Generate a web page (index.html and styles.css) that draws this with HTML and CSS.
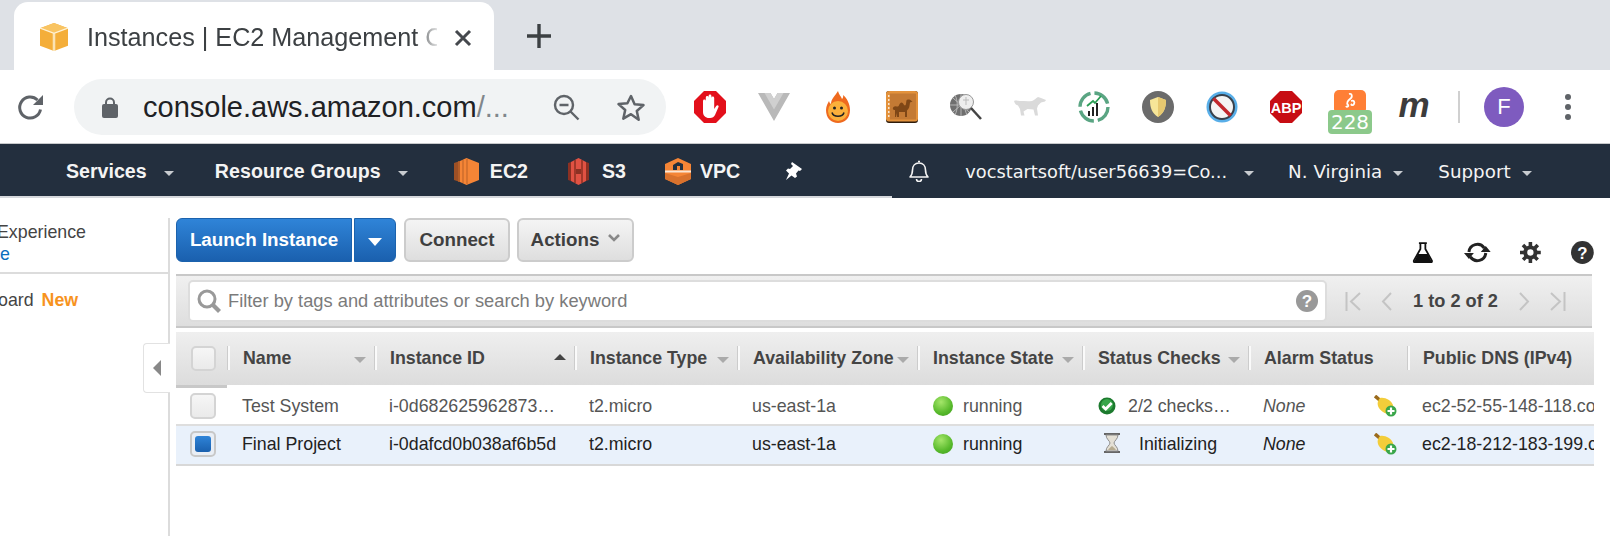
FILE: index.html
```html
<!DOCTYPE html>
<html lang="en">
<head>
<meta charset="utf-8">
<title>Instances | EC2 Management Console</title>
<link rel="stylesheet" href="styles.css">
</head>
<body>
<div class="tabstrip">
  <div class="tab">
    <svg class="favicon" width="28" height="28" viewBox="3 1 22 27" preserveAspectRatio="none"><path d="M3 6 14 1l11 5v17l-11 5-11-5z" fill="#f4ae3a"/><path d="M3 6l11 5 11-5-11-5z" fill="#f9c462"/><path d="M13 11h2v17h-2z" fill="#fbe3b4"/><path d="M3 6l11 5 11-5" fill="none" stroke="#fff2d6" stroke-width="1.2"/></svg>
    <span class="tab-title">Instances | EC2 Management C</span>
    <svg class="tab-close" width="18" height="18" viewBox="0 0 18 18"><path d="M2 2l14 14M16 2 2 16" stroke="#45484d" stroke-width="3" fill="none"/></svg>
  </div>
  <svg class="newtab" width="24" height="24" viewBox="0 0 24 24"><path d="M12 0v24M0 12h24" stroke="#3c4043" stroke-width="3.4" fill="none"/></svg>
</div>
<div class="toolbar">
  <svg class="reload" width="28" height="28" viewBox="0 0 28 28"><path d="M23.5 15.5A10.5 10.5 0 1 1 20.5 6" fill="none" stroke="#5f6368" stroke-width="3"/><path d="M26 1v10H16z" fill="#5f6368"/></svg>
  <div class="omnibox">
    <svg class="lock" width="16" height="21" viewBox="0 0 16 21"><path d="M4 8V5.5a4 4 0 0 1 8 0V8" fill="none" stroke="#5f6368" stroke-width="2"/><rect y="7" width="16" height="14" rx="2" fill="#5f6368"/></svg>
    <span class="url">console.aws.amazon.com<span class="url-dim">/...</span></span>
    <svg class="zoom-ic" width="27" height="27" viewBox="0 0 27 27"><circle cx="11" cy="11" r="9" fill="none" stroke="#5f6368" stroke-width="2.4"/><path d="M6.5 11h9M17.5 17.5l8 8" stroke="#5f6368" stroke-width="2.4" fill="none"/></svg>
    <svg class="star" width="30" height="29" viewBox="0 0 30 29"><path d="M15 3l3.6 8.2 8.9.9-6.7 5.9 1.9 8.7L15 21.2l-7.7 4.5 1.9-8.7-6.7-5.9 8.9-.9z" fill="none" stroke="#5f6368" stroke-width="2.5" stroke-linejoin="round"/></svg>
  </div>
  <div class="exts">
    <svg class="ext" width="32" height="32" viewBox="0 0 32 32"><path d="M10 0h12l10 10v12L22 32H10L0 22V10z" fill="#e3101b"/><path d="M9 17V10a1.4 1.4 0 0 1 2.8 0v5V6.5a1.4 1.4 0 0 1 2.8 0V14V5a1.4 1.4 0 0 1 2.8 0v9V7a1.4 1.4 0 0 1 2.8 0v11l2-3c1-1.400 3-.5 2.300 1l-3.500 8c-1 2-2.500 3-5 3h-1c-3.500 0-6-2.500-6-6z" fill="#fff"/></svg>
    <svg class="ext" width="32" height="28" viewBox="0 0 32 28"><path d="M0 0h12.500L16 6l3.500-6H32L16 28z" fill="#b9b9b9"/><path d="M6.500 0h6L16 6l3.500-6h6L16 16.500z" fill="#d0d0d0"/></svg>
    <svg class="ext" width="24" height="32" viewBox="0 0 24 32"><path d="M12 0c1 4 3 5 4 8 1-1 1.500-2.500 1-4 4 3 7 9 7 15 0 8-5 13-12 13S0 27 0 19c0-4 2-7 3-9 .5 1.500 1 2.500 2 3C5 8 9 5 12 0z" fill="#ef6a1f"/><circle cx="12" cy="20" r="10" fill="#fbb03b"/><circle cx="8.500" cy="17" r="1.500" fill="#222"/><circle cx="15.500" cy="17" r="1.500" fill="#222"/><path d="M6 21.500c1.500 5 10.500 5 12 0" fill="none" stroke="#222" stroke-width="1.600"/></svg>
    <svg class="ext" width="32" height="32" viewBox="0 0 32 32"><rect width="32" height="32" rx="3" fill="#2e1c0c"/><rect width="32" height="30.500" rx="3" fill="#e3923c"/><rect x="4" y="2.500" width="26" height="26" fill="#c47a34"/><path d="M2 5h1.500M2 9h1.500M2 13h1.500M2 17h1.500M2 21h1.500M2 25h1.500" stroke="#fff" stroke-width="1.300"/><path d="M9 26v-7c-2.500 0-2.500-2-1.500-3 1.500-1.500 3-.5 4.500-.5 1 0 1.500-4 3.500-4s2 3 3.500 3c1.200 0 1-3 1.500-5 .2-1.200 3.500-1.400 4.500 0l1.500 1-2.500 1c-.5 3-.5 6-3 8v6.500h-2v-5h-6v5h-2l-.5-4-.5 4z" fill="#7f4716"/></svg>
    <svg class="ext" width="32" height="28" viewBox="0 0 32 28"><circle cx="11" cy="12" r="11" fill="#6f6f6f"/><path d="M0 12h22M11 1v22M3 5l16 14M19 5 3 19M5 2c3 6 3 14 0 20M17 2c-3 6-3 14 0 20" stroke="#bdbdbd" stroke-width=".9" fill="none"/><circle cx="16" cy="9" r="7.500" fill="#eee" stroke="#999" stroke-width="1"/><path d="M13 7h6M16 4v8" stroke="#bbb"/><path d="M21 15l10 11" stroke="#444" stroke-width="2.500"/></svg>
    <svg class="ext" width="32" height="20" viewBox="0 0 32 20"><path d="M0 4c2-1 4 0 6 0 4 0 8 .5 12 0 2-.5 4-3 6-4l3 1 5 2-1 1.500-4 1-3 3-1 3 1 7h-3l-1.500-6-6-.5-4 2.500 1 4H7l-1-6.500-2-3.500C2 8 1 7 0 4z" fill="#dadada"/></svg>
    <svg class="ext" width="32" height="32" viewBox="0 0 32 32"><circle cx="16" cy="16" r="14" fill="none" stroke="#5aa583" stroke-width="3.400" stroke-dasharray="18 4"/><path d="M11 25v-5M15 25v-9M19 25V12" stroke="#222" stroke-width="2"/><path d="M9 15l6-5 2 2 6-7" stroke="#2a9d54" stroke-width="1.800" fill="none"/></svg>
    <svg class="ext" width="32" height="32" viewBox="0 0 32 32"><circle cx="16" cy="16" r="16" fill="#6b6b6b"/><path d="M8 9c3-1 5-2 8-3 3 1 5 2 8 3 0 8-2 13-8 17-6-4-8-9-8-17z" fill="#f6e598"/><path d="M16 6c3 1 5 2 8 3 0 8-2 13-8 17z" fill="#e6c870"/></svg>
    <svg class="ext" width="32" height="32" viewBox="0 0 32 32"><circle cx="16" cy="16" r="15.500" fill="#58aee8"/><circle cx="16" cy="16" r="12" fill="#f4f4f4" stroke="#39414c" stroke-width="2"/><path d="M7.500 7.500l17 17" stroke="#c1272d" stroke-width="3.500"/></svg>
    <svg class="ext" width="32" height="32" viewBox="0 0 32 32"><path d="M10 0h12l10 10v12L22 32H10L0 22V10z" fill="#c70d13"/><text x="16" y="21.500" class="abp-text" text-anchor="middle">ABP</text></svg>
    <div class="ext honey">
      <svg width="32" height="24" viewBox="0 0 32 24"><rect width="32" height="24" rx="5" fill="#ff7f36"/><path d="M15 4c3-1 4 3 1 5-2 1.500-4 4-2 6 1 1-1 3-2 1M17 11c3-1 4 1 3 3s-4 1-2 0" fill="none" stroke="#fff" stroke-width="1.800"/></svg>
      <span class="badge">228</span>
    </div>
    <span class="ext ext-m">m</span>
  </div>
  <span class="tb-sep"></span>
  <span class="avatar">F</span>
  <svg class="dots" width="6" height="26" viewBox="0 0 6 26"><circle cx="3" cy="3" r="3" fill="#5f6368"/><circle cx="3" cy="13" r="3" fill="#5f6368"/><circle cx="3" cy="23" r="3" fill="#5f6368"/></svg>
</div>
<nav class="awsnav">
  <span class="nav-b nav-services">Services</span><i class="chev chev-1"></i>
  <span class="nav-b nav-rg">Resource Groups</span><i class="chev chev-2"></i>
  <svg class="svc svc-ec2" width="25" height="27" viewBox="0 0 25 27"><path d="M6 3 12.500 0 25 5v17l-12.500 5L6 24z" fill="#f58536"/><path d="M0 5 6 3v21l-6-2z" fill="#9d5025"/><path d="M5 3v21M9 2v23M13 1v25" stroke="#c4682a" stroke-width="1.200"/></svg>
  <span class="nav-b svc-t svc-t-ec2">EC2</span>
  <svg class="svc svc-s3" width="21" height="27" viewBox="0 0 21 27"><path d="M3 4l7.500-4L18 4v19l-7.500 4L3 23z" fill="#e05243"/><path d="M0 5l3-1v19l-3-1zM18 4l3 1v17l-3 1z" fill="#8c3123"/><path d="M7 2v23M14 2v23" stroke="#8c3123" stroke-width="1.500"/><rect x="8" y="11" width="5" height="5" fill="#8c3123"/></svg>
  <span class="nav-b svc-t svc-t-s3">S3</span>
  <svg class="svc svc-vpc" width="26" height="27" viewBox="0 0 26 27"><path d="M13 0l13 6v15l-13 6L0 21V6z" fill="#f58536"/><path d="M0 12.500h26v2H0z" fill="#fbe6d4"/><path d="M8 12V7l5-3 5 2v6h-3V8h-3v4z" fill="#232f3e"/><path d="M0 15l13 4 13-4v6l-13 6L0 21z" fill="#d9722d"/></svg>
  <span class="nav-b svc-t svc-t-vpc">VPC</span>
  <svg class="pin" width="18" height="19" viewBox="0 0 18 19"><path d="M7 0l10 7-2 2-1.500-.5-2.500 3 1 3-2 1.500-3.500-2.500L1 18l3-6.500L1 8.500 3 6.500l2 .5 3-3L6 2z" fill="#fff"/></svg>
  <svg class="bell" width="20" height="22" viewBox="0 0 20 22"><path d="M1 17c2-2 2.500-3 2.500-7 0-4 2.500-7 6.500-7s6.500 3 6.500 7c0 4 .5 5 2.500 7z" fill="none" stroke="#f4f4f4" stroke-width="1.600" stroke-linejoin="round"/><path d="M9 1.500h2M7.500 19a2.500 2.500 0 0 0 5 0" stroke="#f4f4f4" stroke-width="1.600" fill="none"/></svg>
  <span class="nav-r nav-acct">vocstartsoft/user56639=Co...</span><i class="chev chev-a"></i>
  <span class="nav-r nav-r-wide nav-reg">N. Virginia</span><i class="chev chev-3"></i>
  <span class="nav-r nav-r-wide nav-sup">Support</span><i class="chev chev-3"></i>
</nav>
<div class="navline"></div>
<div class="page">
  <aside class="side">
    <div class="side-top">
      <div class="side-exp">Experience</div>
      <div class="side-link">e</div>
    </div>
    <div class="side-dash">oard<b class="new">New</b></div>
    <div class="collapse"><i class="tri-left"></i></div>
  </aside>
  <main class="content">
    <div class="actions">
      <button class="btn btn-blue btn-launch">Launch Instance</button>
      <button class="btn btn-blue btn-caret"><i class="tri-white"></i></button>
      <button class="btn btn-gray btn-connect">Connect</button>
      <button class="btn btn-gray btn-actions">Actions<svg class="act-chev" width="12" height="9" viewBox="0 0 12 9"><path d="M1 1l5 5 5-5" fill="none" stroke="#888" stroke-width="2.600"/></svg></button>
      <div class="act-icons">
        <svg width="22" height="21" viewBox="0 0 22 21"><path d="M7 1h8M8.500 1v6L2 18.500c-.5 1 0 2 1 2h16c1 0 1.500-1 1-2L13.500 7V1" fill="none" stroke="#111" stroke-width="1.800"/><path d="M6 12h10l4 8H2z" fill="#111"/></svg>
        <svg class="ic-refresh" width="29" height="21" viewBox="0 0 29 21"><path d="M6 10a8.500 8.500 0 0 1 15.500-4M23 11a8.500 8.500 0 0 1-15.500 4" fill="none" stroke="#222" stroke-width="3"/><path d="M28 10h-10l5-6zM1 11h10l-5 6z" fill="#222"/></svg>
        <svg class="ic-gear" width="21" height="21" viewBox="0 0 21 21"><circle cx="10.500" cy="10.500" r="5.200" fill="none" stroke="#333" stroke-width="4"/><path d="M10.500 0v21M0 10.500h21M3 3l15 15M18 3 3 18" stroke="#333" stroke-width="3.600" stroke-dasharray="4 13"/></svg>
        <svg class="ic-help" width="23" height="23" viewBox="0 0 23 23"><circle cx="11.500" cy="11.500" r="11.500" fill="#333"/><text x="11.500" y="18" class="help-q" text-anchor="middle">?</text></svg>
      </div>
    </div>
    <div class="filterbar">
      <div class="search">
        <svg class="s-ic" width="25" height="24" viewBox="0 0 25 24"><circle cx="10" cy="10" r="8" fill="#fff" stroke="#999" stroke-width="3"/><path d="M15.500 15.500l7 7" stroke="#999" stroke-width="4.200"/></svg>
        <span class="s-text">Filter by tags and attributes or search by keyword</span>
        <svg class="s-help" width="22" height="22" viewBox="0 0 22 22"><circle cx="11" cy="11" r="11" fill="#999"/><text x="11" y="17" class="help-q" text-anchor="middle">?</text></svg>
      </div>
      <div class="pager">
        <svg class="p-first" width="16" height="19" viewBox="0 0 16 19"><path d="M1.500 0v19M15 1 6 9.500 15 18" fill="none" stroke="#c4c4c4" stroke-width="2"/></svg>
        <svg class="p-prev" width="11" height="19" viewBox="0 0 11 19"><path d="M10 1 2 9.500 10 18" fill="none" stroke="#c4c4c4" stroke-width="2"/></svg>
        <span class="p-text">1 to 2 of 2</span>
        <svg class="p-next" width="11" height="19" viewBox="0 0 11 19"><path d="M1 1l8 8.500L1 18" fill="none" stroke="#c4c4c4" stroke-width="2"/></svg>
        <svg class="p-last" width="16" height="19" viewBox="0 0 16 19"><path d="M14.500 0v19M1 1l9 8.500L1 18" fill="none" stroke="#c4c4c4" stroke-width="2"/></svg>
      </div>
    </div>
    <div class="table">
      <div class="thead">
        <div class="th th-check"><span class="chk"></span></div>
        <div class="th"><div class="hc">Name<i class="car"></i></div></div>
        <div class="th"><div class="hc">Instance ID<i class="car car-up"></i></div></div>
        <div class="th"><div class="hc">Instance Type<i class="car"></i></div></div>
        <div class="th"><div class="hc">Availability Zone<i class="car"></i></div></div>
        <div class="th"><div class="hc">Instance State<i class="car"></i></div></div>
        <div class="th"><div class="hc">Status Checks<i class="car"></i></div></div>
        <div class="th"><div class="hc">Alarm Status</div></div>
        <div class="th"><div class="hc">Public DNS (IPv4)</div></div>
      </div>
      <div class="tr">
        <div class="td td-check"><span class="chk chk-row"></span></div>
        <div class="td">Test System</div>
        <div class="td">i-0d682625962873…</div>
        <div class="td">t2.micro</div>
        <div class="td">us-east-1a</div>
        <div class="td"><i class="ball"></i>running</div>
        <div class="td"><svg class="ok" width="18" height="18" viewBox="0 0 18 18"><circle cx="9" cy="9" r="8.500" fill="#1c7a2e"/><circle cx="9" cy="8" r="6" fill="#37a64a"/><path d="M4.500 9l3.200 3 6-6" fill="none" stroke="#fff" stroke-width="2.800"/></svg>2/2 checks…</div>
        <div class="td td-alarm"><em>None</em><svg class="broom" width="23" height="22" viewBox="0 0 23 22"><path d="M1 1l7 6" stroke="#9a6a1c" stroke-width="3.500"/><path d="M6 3c5-1 11 2 13 7 1 3 0 6-2 9-5 1-11-3-13-8-1-3 0-6 2-8z" fill="#f3cd3a"/><circle cx="17" cy="16" r="5.500" fill="#3aa64a"/><path d="M17 12.500v7M13.500 16h7" stroke="#fff" stroke-width="2.200"/></svg></div>
        <div class="td td-dns">ec2-52-55-148-118.co</div>
      </div>
      <div class="tr tr-sel">
        <div class="td td-check"><span class="chk chk-row chk-on"></span></div>
        <div class="td">Final Project</div>
        <div class="td">i-0dafcd0b038af6b5d</div>
        <div class="td">t2.micro</div>
        <div class="td">us-east-1a</div>
        <div class="td"><i class="ball"></i>running</div>
        <div class="td"><svg class="hourglass" width="18" height="20" viewBox="0 0 18 20"><path d="M1 1h16M1 19h16" stroke="#666" stroke-width="2"/><path d="M3 2h12c0 4-4 6-4 8s4 4 4 8H3c0-4 4-6 4-8S3 6 3 2z" fill="#e4e0d5" stroke="#8c8c8c"/><path d="M5 17c1-2 3-3 4-4 1 1 3 2 4 4z" fill="#b6ab8f"/></svg>Initializing</div>
        <div class="td td-alarm"><em>None</em><svg class="broom" width="23" height="22" viewBox="0 0 23 22"><path d="M1 1l7 6" stroke="#9a6a1c" stroke-width="3.500"/><path d="M6 3c5-1 11 2 13 7 1 3 0 6-2 9-5 1-11-3-13-8-1-3 0-6 2-8z" fill="#f3cd3a"/><circle cx="17" cy="16" r="5.500" fill="#3aa64a"/><path d="M17 12.500v7M13.500 16h7" stroke="#fff" stroke-width="2.200"/></svg></div>
        <div class="td td-dns">ec2-18-212-183-199.c</div>
      </div>
    </div>
  </main>
</div>
</body>
</html>
```
FILE: styles.css
```css
* { box-sizing: border-box; }
html, body { margin: 0; padding: 0; }
body { width: 1610px; height: 536px; overflow: hidden; background: #fff; font-family: "Liberation Sans", Arial, sans-serif; color: #444; }
i { display: block; font-style: normal; }

/* browser chrome */
.tabstrip { height: 70px; background: #dee1e6; display: flex; align-items: flex-end; }
.tab { width: 480px; height: 68px; margin-left: 14px; background: #fff; border-radius: 14px 14px 0 0; display: flex; align-items: center; padding-left: 26px; position: relative; }
.favicon { flex: none; margin-top: 2px; }
.tab-title { margin-left: 19px; width: 350px; font-size: 25.200px; white-space: nowrap; overflow: hidden; color: #3c4043; margin-top: 2px; -webkit-mask-image: linear-gradient(to right, #000 328px, transparent 354px); mask-image: linear-gradient(to right, #000 328px, transparent 354px); }
.tab-close { margin-left: 17px; flex: none; margin-top: 3px; }
.newtab { margin: 0 0 22px 33px; }
.toolbar { height: 74px; border-bottom: 1px solid #c8cacc; display: flex; align-items: center; padding-left: 17px; }
.reload { flex: none; margin-top: 2px; }
.omnibox { width: 592px; height: 56px; margin-left: 29px; background: #f1f3f4; border-radius: 28px; display: flex; align-items: center; padding-left: 28px; margin-top: 1px; }
.lock { flex: none; }
.url { margin-left: 25px; width: 410px; font-size: 29px; color: #202124; white-space: nowrap; }
.url-dim { color: #80868b; }
.zoom-ic { flex: none; }
.star { flex: none; margin-left: 36px; }
.exts { display: flex; gap: 32px; align-items: center; margin-left: 28px; width: 764px; }
.ext { flex: none; width: 32px; }
.honey { position: relative; height: 32px; margin-top: -2px; }
.honey svg { display: block; }
.badge { position: absolute; left: -6px; top: 20px; width: 44px; height: 24px; border-radius: 4px; background: #8cc98b; color: #fff; font: 20px/24px "DejaVu Sans", sans-serif; text-align: center; }
.ext-m { font: italic bold 35px/32px "Liberation Sans", sans-serif; color: #3c3c3c; text-align: center; margin-top: -4px; }
.tb-sep { flex: none; width: 2px; height: 32px; background: #d0d0d0; }
.avatar { flex: none; width: 40px; height: 40px; margin-left: 24px; border-radius: 50%; background: #7e5bbf; color: #fff; font: 22px/40px "Liberation Sans", sans-serif; text-align: center; }
.dots { flex: none; margin-left: 41px; }

/* aws nav */
.awsnav { height: 54px; background: #232f3e; display: flex; align-items: center; color: #f4f4f4; padding-left: 66px; }
.navline { width: 892px; height: 2px; margin-top: -2px; background: #d5d8dc; position: relative; }
.nav-b { font-size: 19.600px; font-weight: bold; white-space: nowrap; }
.nav-r { font: 17.800px "DejaVu Sans", sans-serif; white-space: nowrap; }
.nav-r-wide { font-size: 18.300px; }
.chev { width: 0; height: 0; border: 5px solid transparent; border-top: 5px solid #c8ccd0; border-bottom: 0; margin-top: 4px; flex: none; }
.chev-1 { margin-left: 17px; }
.chev-2 { margin-left: 17px; }
.chev-3 { margin-left: 11px; }
.chev-a { margin-left: 17px; }
.nav-rg { margin-left: 41px; letter-spacing: .12px; }
.svc { flex: none; }
.svc-ec2 { margin-left: 46px; }
.svc-s3 { margin-left: 40px; }
.svc-vpc { margin-left: 39px; }
.svc-t-ec2 { margin-left: 11px; }
.svc-t-s3 { margin-left: 13px; }
.svc-t-vpc { margin-left: 9px; }
.pin { flex: none; margin-left: 45px; }
.bell { flex: none; margin-left: 106px; }
.nav-acct { margin-left: 36px; }
.nav-reg { margin-left: 34px; }
.nav-sup { margin-left: 35px; }

/* page */
.page { display: flex; height: 338px; }
.side { width: 170px; flex: none; border-right: 2px solid #dcdcdc; margin-top: 20px; position: relative; font-size: 17.800px; color: #444; }
.side-top { height: 53px; border-bottom: 2px solid #dcdcdc; }
.side-exp { margin-left: -3px; line-height: 22px; margin-top: 3px; }
.side-link { color: #0a6ebd; line-height: 22px; }
.side-dash { margin: 15px 0 0 -2px; line-height: 22px; white-space: nowrap; }
.new { color: #f7931e; margin-left: 8px; }
.collapse { position: absolute; left: 143px; top: 125px; width: 27px; height: 50px; background: #fff; border: 1px solid #e2e2e2; border-right: 0; border-radius: 4px 0 0 4px; display: flex; align-items: center; justify-content: center; }
.tri-left { width: 0; height: 0; border: 8px solid transparent; border-right: 8px solid #888; border-left: 0; }
.content { width: 1418px; margin-left: 6px; padding-top: 20px; flex: none; }
.actions { display: flex; height: 44px; }
.btn { height: 44px; border-radius: 6px; font: bold 18.800px "Liberation Sans", sans-serif; padding: 0; }
.btn-blue { background: linear-gradient(#2f84d8, #1a60ae); border: 1px solid #1b62ad; color: #fff; }
.btn-gray { background: linear-gradient(#f4f4f4, #dedede); border: 2px solid #cccccc; color: #3f3f3f; }
.btn-launch { width: 176px; border-radius: 6px 0 0 6px; }
.btn-caret { width: 42px; margin-left: 2px; border-radius: 0 6px 6px 0; display: flex; align-items: center; justify-content: center; }
.tri-white { width: 0; height: 0; border: 7px solid transparent; border-top: 8px solid #fff; border-bottom: 0; margin-top: 3px; }
.btn-connect { width: 106px; margin-left: 8px; }
.btn-actions { width: 117px; margin-left: 7px; }
.act-chev { margin-left: 9px; margin-bottom: 3px; }
.act-icons { margin-left: auto; display: flex; align-items: flex-end; height: 45px; width: 188px; padding-left: 6px; }
.ic-refresh { margin-left: 29px; }
.ic-gear { margin-left: 29px; }
.ic-help { margin-left: 30px; margin-bottom: -1px; }
.filterbar { height: 54px; margin-top: 12px; background: linear-gradient(#f0f0f0, #dedede); border-top: 2px solid #c8c8c8; border-bottom: 2px solid #c8c8c8; display: flex; align-items: center; padding-left: 12px; width: 1416px; }
.search { width: 1139px; height: 42px; background: #fff; border: 2px solid #dddddd; border-radius: 5px; display: flex; align-items: center; padding-left: 7px; }
.s-ic { flex: none; }
.s-text { margin-left: 6px; font-size: 18.300px; color: #7b7b7b; white-space: nowrap; }
.s-help { flex: none; margin-left: auto; margin-right: 7px; }
.help-q { font: bold 17px "Liberation Sans", sans-serif; fill: #fff; }
.abp-text { font: bold 14.500px "Liberation Sans", sans-serif; fill: #fff; }
.pager { display: flex; align-items: center; margin-left: 18px; }
.p-prev { margin-left: 20px; }
.p-text { margin-left: 21px; font-size: 18.200px; font-weight: bold; color: #444; white-space: nowrap; }
.p-next { margin-left: 21px; }
.p-last { margin-left: 20px; }

/* table */
.table { margin-top: 4px; width: 1418px; }
.thead, .tr { display: grid; grid-template-columns: 51px 147px 200px 163px 180px 165px 166px 159px 187px; }
.thead { height: 56px; background: linear-gradient(#efefef, #dcdcdc); border-bottom: 3px solid #c8c8c8; position: relative; }
.th { display: flex; align-items: center; padding-bottom: 1px; border-bottom: 3px solid #fff; height: 56px; }
.th-check { padding-left: 15px; border-bottom-color: transparent; }
.hc { flex: 1; height: 24px; border-left: 1px solid #ccc; box-shadow: inset 2px 0 0 #fafafa; padding: 0 8px 0 15px; display: flex; align-items: center; justify-content: space-between; font-size: 17.800px; font-weight: bold; color: #444; white-space: nowrap; }
.car { flex: none; width: 0; height: 0; border: 6px solid transparent; border-top: 6px solid #aaa; border-bottom: 0; margin-top: 3px; }
.car-up { border-top: 0; border-bottom: 6px solid #444; margin-top: -3px; }
.chk { display: block; width: 25px; height: 25px; border: 2px solid #d4d4d4; border-radius: 5px; background: linear-gradient(#f6f6f6, #eaeaea); }
.chk-row { width: 26px; height: 26px; }
.chk-on { background: #e9eef5; padding: 3px; border-color: #c8c8c8; }
.chk-on::after { content: ""; display: block; width: 16px; height: 16px; border-radius: 3px; background: linear-gradient(#2f84d8, #1a60ae); }
.tr { height: 38px; border-bottom: 2px solid #dedede; background: #fff; font-size: 17.800px; color: #555; }
.tr-sel { height: 40px; padding-bottom: 2px; background: #e9f1fb; color: #222; border-bottom: 2px solid #d8d8d8; }
.td { display: flex; align-items: center; padding-left: 15px; white-space: nowrap; overflow: hidden; min-width: 0; }
.td-check { padding-left: 14px; overflow: visible; }
.ball { flex: none; width: 20px; height: 20px; margin-left: 1px; border-radius: 50%; background: radial-gradient(circle at 40% 30%, #a5e66a, #57b92b 60%, #3d9a1e); margin-right: 10px; }
.ok { flex: none; margin: 0 12px 0 1px; }
.hourglass { flex: none; margin: -3px 18px 0 6px; }
.td-alarm em { font-style: italic; width: 111px; }
.broom { flex: none; }
```
